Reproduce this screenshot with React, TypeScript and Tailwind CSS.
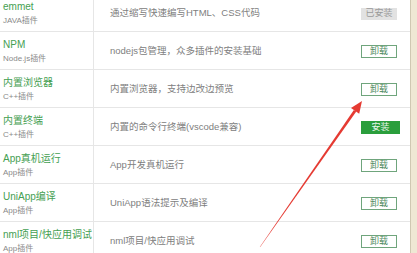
import React from "react";

type Row = {
  name: string;
  sub: string;
  desc: string;
  btn: "installed" | "uninstall" | "install";
};

const rows: Row[] = [
  { name: "emmet", sub: "JAVA插件", desc: "通过缩写快速编写HTML、CSS代码", btn: "installed" },
  { name: "NPM", sub: "Node.js插件", desc: "nodejs包管理，众多插件的安装基础", btn: "uninstall" },
  { name: "内置浏览器", sub: "C++插件", desc: "内置浏览器，支持边改边预览", btn: "uninstall" },
  { name: "内置终端", sub: "C++插件", desc: "内置的命令行终端(vscode兼容)", btn: "install" },
  { name: "App真机运行", sub: "App插件", desc: "App开发真机运行", btn: "uninstall" },
  { name: "UniApp编译", sub: "App插件", desc: "UniApp语法提示及编译", btn: "uninstall" },
  { name: "nml项目/快应用调试", sub: "App插件", desc: "nml项目/快应用调试", btn: "uninstall" },
];

function Btn({ kind }: { kind: Row["btn"] }) {
  if (kind === "installed")
    return (
      <div className="w-[36px] h-[12px] flex items-center justify-center bg-[#e2e2e2] text-[#9a9a9a] text-[9px] leading-none">
        已安装
      </div>
    );
  if (kind === "install")
    return (
      <div className="w-[39px] h-[13px] flex items-center justify-center bg-[#2a9e3c] text-[#e8f5ea] text-[9px] leading-none">
        安装
      </div>
    );
  return (
    <div className="w-[36px] h-[13px] flex items-center justify-center border border-[#6fa57c] text-[#4f8a5e] text-[9px] leading-none bg-white">
      卸载
    </div>
  );
}

export default function App() {
  return (
    <div
      className="relative w-[417px] h-[253px] overflow-hidden bg-white flex"
      style={{ fontFamily: '"Liberation Sans", "Noto Sans CJK SC", sans-serif' }}
    >
      <div className="w-[411px] border-r border-[#cfc8b2] flex flex-col -mt-[6px]">
        {rows.map((r, i) => (
          <div key={i} className="h-[38px] shrink-0 flex border-b border-[#e6e6e6]">
            <div className="w-[94px] shrink-0 border-r border-[#e6e6e6] pl-[3px] flex flex-col justify-center pt-[2px]">
              <div className="text-[10px] leading-[14px] text-[#45a052] whitespace-nowrap">{r.name}</div>
              <div className="text-[8px] leading-[13px] text-[#8a8a8a] whitespace-nowrap">{r.sub}</div>
            </div>
            <div className="flex-1 pl-[16px] flex items-center text-[9.5px] text-[#808080] whitespace-nowrap pt-[2px]">
              {r.desc}
            </div>
            <div className="w-[50px] shrink-0 flex items-center pl-[1px] pt-[2px]">
              <Btn kind={r.btn} />
            </div>
          </div>
        ))}
      </div>
      <div className="flex-1 bg-[#efe8d4]" />
      <svg className="absolute left-0 top-0 pointer-events-none" width="417" height="253" viewBox="0 0 417 253">
        <polygon
          points="259.8,247 260.2,247 356.3,111.6 353.9,110.0"
          fill="#e53a32"
        />
        <polygon points="362,101 359.2,113.7 351.0,108.0" fill="#e53a32" />
      </svg>
    </div>
  );
}
